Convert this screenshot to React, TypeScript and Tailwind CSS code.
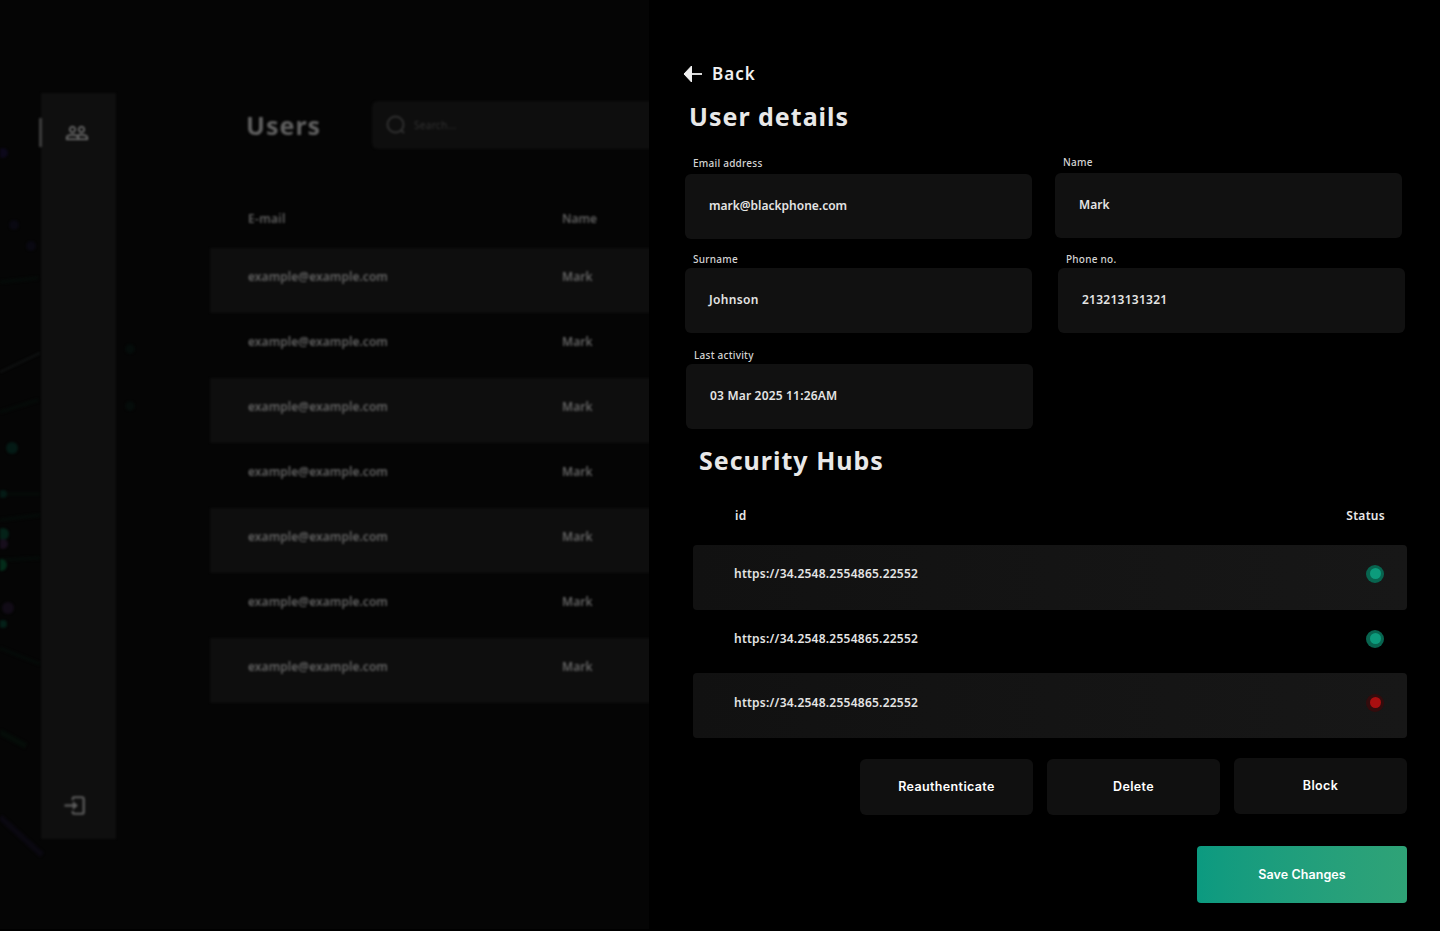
import React from 'react';
import { MdPeopleOutline } from 'react-icons/md';

const users = Array.from({ length: 7 }, () => ({ email: 'example@example.com', name: 'Mark' }));

const BackArrow = () => (
  <svg width="20" height="18" viewBox="0 0 20 18" fill="none">
    <path d="M8.500 1 1 9l7.500 8V1Z" fill="#f0f0f0" stroke="#f0f0f0" strokeWidth="1" strokeLinejoin="round" />
    <path d="M8 9h11" stroke="#f0f0f0" strokeWidth="1.800" />
  </svg>
);

const ExitIcon = () => (
  <svg className="-ml-1" width="22" height="21" viewBox="0 0 24 22" fill="none" stroke="#5c5c5c" strokeWidth="2.400">
    <path d="M9.500 5V3.500a1.500 1.500 0 0 1 1.500-1.500h8.500a2 2 0 0 1 2 2v14a2 2 0 0 1-2 2H11a1.500 1.500 0 0 1-1.500-1.500V17" />
    <path d="M.5 11H14" />
    <path d="m10 7 4.500 4-4.500 4V7Z" fill="#5c5c5c" strokeWidth="1" />
  </svg>
);

const SearchIcon = () => (
  <svg width="20" height="20" viewBox="0 0 20 20" fill="none" stroke="#303030" strokeWidth="2">
    <circle cx="9.500" cy="9.500" r="8" />
    <path d="m15 15 3 3" />
  </svg>
);

// Faint coloured particles at the left edge of the page
const Particles = () => (
  <svg width="210" height="929" fill="none">
    <path d="M0 372 40 353" stroke="#0f1111" strokeWidth="2" />
    <path d="M0 494h40M0 520l40-5M0 412l38-12M0 560l40-2M0 648l40 16M0 282l38-4" stroke="#050a08" strokeWidth="4" />
    <path d="M0 817l42 38" stroke="#0a0810" strokeWidth="6" />
    <path d="M0 732l26 14" stroke="#050c08" strokeWidth="6" />
    <circle cx="3" cy="153" r="5" fill="#0c081a" />
    <circle cx="14" cy="225" r="5" fill="#090811" />
    <circle cx="31" cy="246" r="5" fill="#090811" />
    <circle cx="12" cy="448" r="6" fill="#041a15" />
    <circle cx="3" cy="494" r="4" fill="#041a15" />
    <circle cx="3" cy="534" r="6" fill="#042218" />
    <circle cx="3" cy="544" r="5" fill="#170e1c" />
    <circle cx="1" cy="565" r="6" fill="#032c1a" />
    <circle cx="8" cy="608" r="6" fill="#110b16" />
    <circle cx="3" cy="624" r="4" fill="#042018" />
    <circle cx="130" cy="349" r="5" fill="#050c0a" />
    <circle cx="130" cy="406" r="5" fill="#050c0a" />
  </svg>
);

type FieldProps = { label: string; value: string; className?: string; labelClass?: string; valueClass: string };

const Field = ({ label, value, className = '', labelClass = 'mb-[3px]', valueClass }: FieldProps) => (
  <div className={`w-[346.5px] ${className}`}>
    <div className={`h-4 pl-2 text-[10px] leading-4 font-medium tracking-[0.24px] text-[#d4d4d4] ${labelClass}`}>{label}</div>
    <div className={`flex h-[65px] items-center rounded-md bg-[#111] pb-0.5 pl-6 text-xs font-semibold text-[#e4e4e4] ${valueClass}`}>
      {value}
    </div>
  </div>
);

const Dot = ({ online }: { online: boolean }) => (
  <div className={`flex size-[18px] items-center justify-center rounded-full ${online ? 'bg-[#08644f]' : 'bg-[#330c0d]'}`}>
    <div className={`size-[11px] rounded-full ${online ? 'bg-[#0c9b7c]' : 'bg-[#a80f10]'}`}></div>
  </div>
);

const HubRow = ({ online, className = '' }: { online: boolean; className?: string }) => (
  <div className={`flex items-center justify-between rounded-sm pl-[41px] pr-[23px] ${className}`}>
    <span className="text-xs font-semibold tracking-[0.24px] text-[#e4e4e4]">https://34.2548.2554865.22552</span>
    <Dot online={online} />
  </div>
);

const ActionButton = ({ text, className = '' }: { text: string; className?: string }) => (
  <button className={`h-14 w-[173px] rounded-md bg-[#101010] pt-px font-['Inter'] text-[12.5px] font-semibold tracking-[0.36px] text-white ${className}`}>
    {text}
  </button>
);

const UsersPage = () => (
  <div className="relative h-[929px] w-[649px] shrink-0 overflow-hidden bg-[#050505]">
    <div className="absolute left-0 top-0 blur-[1px]"><Particles /></div>
    <div className="relative flex w-[720px] pl-[41px] pt-[93px] blur-[1.1px]">
      <aside className="relative flex h-[746px] w-[75px] flex-col items-center justify-between bg-[#0f0f0f] pb-[23px] pr-1 pt-7">
        <div className="absolute -left-[2px] top-[25px] h-[29px] w-[3px] bg-[#3c3c3c]"></div>
        <MdPeopleOutline size={24} color="#767676" />
        <ExitIcon />
      </aside>
      <main className="ml-[94px] flex-1">
        <div className="flex items-center pl-9 pt-2">
          <h1 className="w-[126px] text-[25px] leading-none font-bold tracking-[1px] text-[#606060]">Users</h1>
          <div className="flex h-12 flex-1 items-center gap-2 rounded-md bg-[#0e0e0e] pl-[14px]">
            <SearchIcon />
            <span className="text-[10px] tracking-[0.3px] text-[#323232]">Search...</span>
          </div>
        </div>
        <div className="mt-[62px] flex h-4 pl-[38px] text-xs leading-4 font-semibold tracking-[0.3px] text-[#606060]">
          <span className="w-[314px]">E-mail</span>
          <span className="tracking-normal">Name</span>
        </div>
        <div className="mt-[21px]">
          {users.map((user, i) => (
            <div
              key={i}
              className={`flex h-[65px] items-center pb-2 pl-[38px] text-xs font-semibold tracking-[0.05px] text-[#646464] ${i % 2 === 0 ? 'bg-[#0e0e0e]' : ''}`}
            >
              <span className="w-[314px]">{user.email}</span>
              <span>{user.name}</span>
            </div>
          ))}
        </div>
      </main>
    </div>
  </div>
);

const DetailsPanel = () => (
  <section className="h-[931px] flex-1 bg-black pl-9 pt-[62px]">
    <button className="-ml-[2px] flex h-6 items-center gap-[9px] text-[17px] font-semibold tracking-[1px] text-[#f0f0f0]">
      <BackArrow />
      <span>Back</span>
    </button>
    <h2 className="mt-3 h-10 pl-1 text-[25px] leading-9 font-bold tracking-[1px] text-[#e8e8e8]">User details</h2>
    <div className="flex h-[303px]">
      <div className="w-[370px] pt-[17px]">
        <Field label="Email address" value="mark@blackphone.com" valueClass="tracking-normal" />
        <Field label="Surname" value="Johnson" className="mt-3" labelClass="mb-px" valueClass="tracking-[0.35px]" />
        <Field label="Last activity" value="03 Mar 2025 11:26AM" className="ml-px mt-[14px]" labelClass="mb-px" valueClass="tracking-[0.18px]" />
      </div>
      <div className="pt-4">
        <Field label="Name" value="Mark" valueClass="tracking-normal" />
        <Field label="Phone no." value="213213131321" className="ml-[3px] mt-[13px]" labelClass="mb-px" valueClass="tracking-[0.25px]" />
      </div>
    </div>
    <h2 className="h-10 pl-[14px] text-[25px] leading-[39px] font-bold tracking-[1px] text-[#e8e8e8]">Security Hubs</h2>
    <div className="ml-2 w-[714px]">
      <div className="mt-[27px] flex h-4 justify-between pl-[42px] pr-[22px] text-xs leading-4 font-semibold tracking-[0.3px] text-[#e8e8e8]">
        <span>id</span>
        <span>Status</span>
      </div>
      <div className="mt-[21px]">
        <HubRow online className="h-[65px] bg-linear-to-r from-[#111] to-[#171717] pb-2" />
        <HubRow online className="h-[63px] pb-[6px]" />
        <HubRow online={false} className="h-[65px] bg-linear-to-r from-[#111] to-[#171717] pb-[6px]" />
      </div>
      <div className="mt-5 flex justify-end gap-[14px]">
        <ActionButton text="Reauthenticate" className="mt-px" />
        <ActionButton text="Delete" className="mt-px" />
        <ActionButton text="Block" />
      </div>
      <div className="mt-[31px] flex justify-end">
        <button className="h-[57px] w-[210px] rounded bg-linear-to-r from-[#0b9a80] to-[#2fa377] pt-0.5 font-['Inter'] text-[12.5px] font-semibold tracking-[0.08px] text-white">
          Save Changes
        </button>
      </div>
    </div>
  </section>
);

const App = () => {
  return (
    <div className="flex h-[931px] w-[1440px] overflow-hidden bg-black font-['Noto_Sans',sans-serif]">
      <UsersPage />
      <DetailsPanel />
    </div>
  );
};

export default App;
